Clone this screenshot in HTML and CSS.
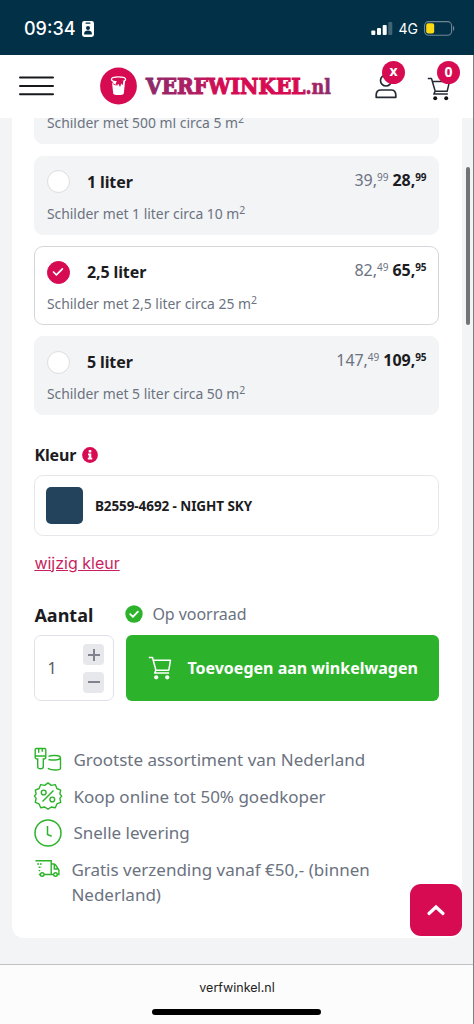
FILE: index.html
```html
<!DOCTYPE html>
<html lang="nl">
<head>
<meta charset="utf-8">
<meta name="viewport" content="width=device-width, initial-scale=1">
<title>Verfwinkel.nl</title>
<link rel="stylesheet" href="styles.css">
</head>
<body>
<div class="phone">
  <div class="status">
    <div class="time"><span>09:34</span>
      <svg width="12" height="16" viewBox="0 0 12 16"><rect width="12" height="16" rx="2.4" fill="#fff"/><rect x="3.5" y="1.6" width="5" height="1.2" rx=".6" fill="#023047"/><circle cx="6" cy="6.9" r="2" fill="#023047"/><path d="M2.2 13.4V12c0-1.600 1.600-2.500 3.800-2.500s3.800.9 3.800 2.500v1.400z" fill="#023047"/></svg>
    </div>
    <div class="signal">
      <svg width="22" height="14" viewBox="0 0 22 14"><g fill="#fff"><rect x="0.300" y="8.500" width="4" height="4.500" rx="1"/><rect x="6" y="6" width="4" height="7" rx="1"/><rect x="11.700" y="3" width="4" height="10" rx="1"/><rect x="17.300" y="0" width="4" height="13" rx="1" opacity=".25"/></g></svg>
      <span>4G</span>
      <svg width="31" height="15" viewBox="0 0 31 15"><rect x=".6" y=".6" width="27" height="13.600" rx="4" fill="none" stroke="#718694" stroke-width="1.100"/><rect x="2.200" y="2.200" width="8" height="10.400" rx="2" fill="#fbd914"/><path d="M29 5v4.800c1.700-.6 1.700-4.200 0-4.800z" fill="#718694"/></svg>
    </div>
  </div>
  <header class="header">
    <svg class="menu" width="35" height="20" viewBox="0 0 35 20"><path d="M1 1.500h33M1 10h33M1 18.300h33" stroke="#16181b" stroke-width="2" stroke-linecap="round"/></svg>
    <svg class="logo" width="232" height="38" viewBox="0 0 232 38">
      <defs><linearGradient id="brand" gradientUnits="userSpaceOnUse" x1="46" x2="231" y1="0" y2="0"><stop offset="0" stop-color="#8a2b6c"/><stop offset=".27" stop-color="#b31d62"/><stop offset=".42" stop-color="#d60b52"/><stop offset=".82" stop-color="#d60b52"/><stop offset=".9" stop-color="#a82165"/><stop offset="1" stop-color="#8a2b6c"/></linearGradient></defs>
      <circle cx="18.500" cy="19" r="18.400" fill="#d60b52"/>
      <path d="M11.700 12.500l1.500 14c.2 2 10.400 2 10.600 0l1.500-14z" fill="#fff"/>
      <ellipse cx="18.500" cy="12.300" rx="7.100" ry="2.500" fill="#d60b52" stroke="#fff" stroke-width="1.300"/>
      <path d="M17 13.800h6.300l-.4 3.200c-.2 1.300-1.200 1-1.300-.1-.5-1-.8.200-.9 1.700-.1 1.500-1.500 1.400-1.500 0 0-1.200-.6-1.700-1.400-1.100-1 .6-1.800.1-2.300-.6" fill="#d60b52"/>
      <path d="M11.700 14c.7 3.200 3 4.200 6 3.900" fill="none" stroke="#d60b52" stroke-width=".9"/>
      <text class="wordmark" x="46" y="27" textLength="185" lengthAdjust="spacingAndGlyphs">VERFWINKEL<tspan class="tld">.nl</tspan></text>
    </svg>
    <div class="action account">
      <svg width="22" height="25" viewBox="0 0 22 25" fill="none" stroke="#252a35" stroke-width="1.700"><circle cx="11" cy="6.500" r="5.500"/><path d="M1.200 23.300v-2.200c0-3.200 2-5.100 4.800-5.100h10c2.800 0 4.800 1.900 4.800 5.100v2.200z" stroke-linejoin="round"/></svg>
      <span class="badge">x</span>
    </div>
    <div class="action basket">
      <svg width="24" height="24" viewBox="0 0 24 24"><path d="M.8 1.500h3.700l3.700 12.700h12.600M5.500 4.500h17l-2.300 9.700M8.200 14.200l-1.400 2.900h14" fill="none" stroke="#252a35" stroke-width="1.500" stroke-linejoin="round"/><circle cx="8.200" cy="21.300" r="2" fill="#111"/><circle cx="19.200" cy="21.300" r="2" fill="#111"/></svg>
      <span class="badge">0</span>
    </div>
  </header>
  <main class="main">
    <section class="card">
      <div class="options">
        <div class="option"><div class="top"></div><p class="desc">Schilder met 500 ml circa 5 m<sup>2</sup></p></div>
        <div class="option"><div class="top"><i class="radio"></i><b class="name">1 liter</b><span class="price"><span class="old">39,<sup>99</sup></span> <b>28,<sup>99</sup></b></span></div><p class="desc">Schilder met 1 liter circa 10 m<sup>2</sup></p></div>
        <div class="option selected"><div class="top"><i class="radio"><svg width="12" height="10" viewBox="0 0 12 10"><path d="M1.500 5l2.900 2.900 6-6" fill="none" stroke="#fff" stroke-width="1.700" stroke-linecap="round" stroke-linejoin="round"/></svg></i><b class="name">2,5 liter</b><span class="price"><span class="old">82,<sup>49</sup></span> <b>65,<sup>95</sup></b></span></div><p class="desc">Schilder met 2,5 liter circa 25 m<sup>2</sup></p></div>
        <div class="option"><div class="top"><i class="radio"></i><b class="name">5 liter</b><span class="price"><span class="old">147,<sup>49</sup></span> <b>109,<sup>95</sup></b></span></div><p class="desc">Schilder met 5 liter circa 50 m<sup>2</sup></p></div>
      </div>
      <div class="label">Kleur <svg width="16" height="16" viewBox="0 0 16 16"><circle cx="8" cy="8" r="7.900" fill="#d60b52"/><rect x="6.700" y="3" width="2.600" height="2.400" rx=".5" fill="#fff"/><path d="M6 6.600h3.300v4.200h1v1.700H5.800v-1.700h1V8.300H6z" fill="#fff"/></svg></div>
      <div class="colour"><span class="swatch"></span><b>B2559-4692 - NIGHT SKY</b></div>
      <a class="change">wijzig kleur</a>
      <div class="stockrow"><b>Aantal</b><svg width="18" height="18" viewBox="0 0 18 18"><circle cx="9" cy="9" r="8.700" fill="#2db32b"/><path d="M5.200 9.200l2.700 2.600 5-5.200" fill="none" stroke="#fff" stroke-width="1.800" stroke-linecap="round" stroke-linejoin="round"/></svg><span>Op voorraad</span></div>
      <div class="buy">
        <div class="quantity"><span>1</span><div class="steps">
          <i><svg width="14" height="14" viewBox="0 0 14 14"><path d="M1 7h12M7 1v12" stroke="#83838f" stroke-width="2"/></svg></i>
          <i><svg width="14" height="14" viewBox="0 0 14 14"><path d="M1 7h12" stroke="#83838f" stroke-width="2"/></svg></i></div></div>
        <div class="add"><svg width="24" height="24" viewBox="0 0 24 24"><path d="M.8 1.500h3.700l3.400 12.700h13.200M5.500 4.200h17l-1.700 10M7.900 14.200l-1.200 2.800h14.400" fill="none" stroke="#fff" stroke-width="1.500" stroke-linejoin="round"/><circle cx="8.200" cy="21.300" r="2.100" fill="#fff"/><circle cx="19.200" cy="21.300" r="2.100" fill="#fff"/></svg><b>Toevoegen aan winkelwagen</b></div>
      </div>
      <ul class="usps">
        <li><svg width="28" height="28" viewBox="0 0 28 28"><path d="M1.200 3.700q0-1.200 1.200-1.200h8.200q1.200 0 1.200 1.200V11q0 2-2 2H9.300v7.800q0 2-2.800 2t-2.800-2V13H3.200q-2 0-2-2zM1.200 10h10.600M4.700 3v3.700M8.200 3v2.700"/><path d="M14.500 10.300c3-1.300 11.800-1.200 12 1.300v10.600c0 2.400-9 2.400-12.700.2M14.500 13.500c4 1 11.500.8 12-1.900"/></svg><span>Grootste assortiment van Nederland</span></li>
        <li><svg width="28" height="28" viewBox="0 0 28 28"><path d="M14 .9l3.300 2.500 4-.8 1.600 3.900 3.800 1.600-.8 4L27.600 14l-1.700 2.300.8 4-3.800 1.600-1.600 3.900-4-.8L14 27.200 10.700 25l-4 .8-1.600-3.900-3.800-1.600.8-4L.5 14l1.600-1.900-.8-4 3.800-1.600 1.600-3.900 4 .8z" stroke-linejoin="round"/><path d="M8.500 19.500l11-11"/><circle cx="9.700" cy="10.500" r="2.400"/><circle cx="18.300" cy="17.500" r="2.400"/></svg><span>Koop online tot 50% goedkoper</span></li>
        <li><svg width="28" height="28" viewBox="0 0 28 28"><circle cx="14" cy="14" r="13" stroke-width="1.500"/><path d="M13.500 7v8.500l4.200 1.800" stroke-width="1.500"/></svg><span>Snelle levering</span></li>
        <li class="shipping"><svg width="28" height="28" viewBox="0 0 28 28"><path d="M1.500 5.800h15.700v13.700M17.200 9h2.300q1.300 0 2.100 1l3.300 5v4.500h-1.500M20.300 9.400V14h4.300M10 19.500h9.800M4.800 19.500h1.700"/><circle cx="8.200" cy="19.500" r="1.800"/><circle cx="21.500" cy="19.500" r="1.800"/><path d="M3.200 9h4.500M4.700 12.300h3M4.700 15.600h1.500" stroke-dasharray="1.800 1"/></svg><span>Gratis verzending vanaf €50,- (binnen Nederland)</span></li>
      </ul>
    </section>
    <div class="totop"><svg width="18" height="12" viewBox="0 0 18 12"><path d="M2 9.500L9 3l7 6.500" fill="none" stroke="#fff" stroke-width="3.200" stroke-linecap="round"/></svg></div>
    <div class="scroll"></div>
  </main>
  <footer class="browser"><span>verfwinkel.nl</span><div class="home"></div></footer>
  <div class="edge"></div>
</div>
</body>
</html>
```
FILE: styles.css
```css
* { box-sizing: border-box; }
body { margin: 0; font-family: "Noto Sans", "Open Sans", sans-serif; color: #1c1c1f; }
svg { display: block; flex: none; overflow: visible; }
.phone { width: 474px; height: 1024px; display: flex; flex-direction: column; position: relative; overflow: hidden; background: #f3f4f6; }
.status { height: 55px; flex: none; background: #023047; color: #fff; display: flex; justify-content: space-between; padding: 2px 19px 0 24px; align-items: center; font-family: Inter, sans-serif; }
.time { display: flex; align-items: center; gap: 6px; font-size: 18px; font-weight: 500; }
.signal { display: flex; align-items: center; gap: 6px; font-size: 14px; }
.header { height: 63px; flex: none; background: #fff; position: relative; z-index: 2; display: flex; align-items: center; padding: 0 21px 0 19px; }
.menu { margin-top: -1px; }
.logo { margin-left: 46px; margin-top: -1px; }
.wordmark { font: 700 23px "DejaVu Serif", serif; fill: url(#brand); stroke: url(#brand); stroke-width: 1.200px; }
.tld { font-size: 20px; stroke-width: .6px; }
.action { position: relative; }
.account { margin-left: 43px; margin-top: 5px; height: 31px; }
.basket { margin-left: 30px; margin-top: 9px; height: 29px; }
.badge { position: absolute; width: 23px; height: 23px; border-radius: 50%; background: #d60b52; color: #fff; font-weight: 700; font-size: 14px; line-height: 22px; text-align: center; }
.account .badge { left: 7px; top: -13px; line-height: 20px; }
.basket .badge { left: 10px; top: -16px; }
.main { height: 846px; flex: none; position: relative; overflow: hidden; padding: 0 12px; }
.card { height: 820px; background: #fff; border-radius: 0 0 12px 12px; padding: 0 23px 0 22.400px; display: flex; flex-direction: column; }
.options { display: flex; flex-direction: column; gap: 11.500px; margin-top: -52.600px; }
.option { height: 78.800px; flex: none; border-radius: 9px; background: #f3f4f6; border: 1px solid #f3f4f6; padding: 12px 11.500px; }
.selected { background: #fff; border-color: #d4d7da; }
.top { display: flex; height: 26px; align-items: center; }
.radio { width: 23px; height: 23px; border-radius: 50%; background: #fff; border: 1px solid #dcdddf; display: grid; place-items: center; }
.selected .radio { background: #d60b52; border-color: #d60b52; }
.name { margin-left: 17px; font-size: 16px; font-weight: 700; letter-spacing: -.1px; }
.price { margin-left: auto; font-size: 16px; line-height: 23px; align-self: flex-start; white-space: pre; letter-spacing: -.05px; }
.old { color: #6b7280; }
sup { font-size: 10px; line-height: 0; vertical-align: baseline; position: relative; top: -5px; }
.desc { margin: 7px 0 0; font-size: 13.900px; line-height: 23px; color: #6b7280; }
.desc sup { font-size: 10.500px; }
.label { height: 24px; margin-top: 28px; display: flex; align-items: center; gap: 6px; font-size: 16px; font-weight: 700; letter-spacing: -.1px; }
.colour { height: 61px; margin-top: 8px; border: 1px solid #e5e7eb; border-radius: 9px; display: flex; align-items: center; padding-left: 11px; gap: 11.500px; font-size: 13.500px; }
.colour b { font-weight: 700; letter-spacing: -.08px; }
.swatch { width: 37px; height: 37px; border-radius: 5px; background: #23435c; }
.change { margin-top: 14.600px; height: 24px; line-height: 24px; align-self: flex-start; color: #c71f5f; text-decoration: underline; font-family: Inter, sans-serif; font-size: 16px; }
.stockrow { height: 28px; margin-top: 25px; display: flex; align-items: center; font-size: 16px; color: #6b7280; }
.stockrow b { width: 91px; margin-top: 2px; color: #1c1c1f; font-size: 18px; font-weight: 700; }
.stockrow span { margin-left: 9px; letter-spacing: -.05px; }
.buy { display: flex; gap: 12px; height: 66px; margin-top: 7px; }
.quantity { width: 80px; border: 1px solid #dfe3e7; border-radius: 7px; display: flex; align-items: center; justify-content: space-between; padding: 0 9px 0 12px; font-size: 16px; color: #555b66; }
.steps { display: flex; flex-direction: column; gap: 6.500px; padding-top: 2px; }
.steps i { width: 21px; height: 21px; border-radius: 4px; background: #e7e8ec; display: grid; place-items: center; }
.add { flex: 1; background: #2db32b; color: #fff; border-radius: 6px; display: flex; align-items: center; padding-left: 22px; gap: 15px; font-size: 16px; white-space: nowrap; }
.usps { list-style: none; padding: 0; margin: 45px 0 0; font-size: 17px; line-height: 25px; color: #6b7280; display: flex; flex-direction: column; gap: 8.600px; }
.usps li { display: flex; gap: 11.500px; align-items: center; height: 28px; }
.usps svg { fill: none; stroke: #2db32b; stroke-width: 1.400; margin-left: -.5px; }
.usps .shipping { align-items: flex-start; gap: 9.500px; height: 52px; }
.shipping span { width: 320px; margin-top: 2px; }
.totop { position: absolute; left: 410px; top: 766px; width: 52px; height: 52px; border-radius: 11px; background: #d60b52; display: grid; place-items: center; }
.scroll { position: absolute; left: 466px; top: 49px; width: 4px; height: 158px; border-radius: 2px; background: #727477; }
.browser { height: 60px; flex: none; border-top: 1px solid #bfc1c4; background: #fcfcfd; text-align: center; position: relative; font: 12.500px/45px Inter, sans-serif; color: #222; }
.home { position: absolute; left: 152px; bottom: 9px; width: 169px; height: 6px; border-radius: 3px; background: #000; }
.edge { position: absolute; right: 0; top: 55px; bottom: 0; width: 1px; background: #7d8083; z-index: 3; }
```
